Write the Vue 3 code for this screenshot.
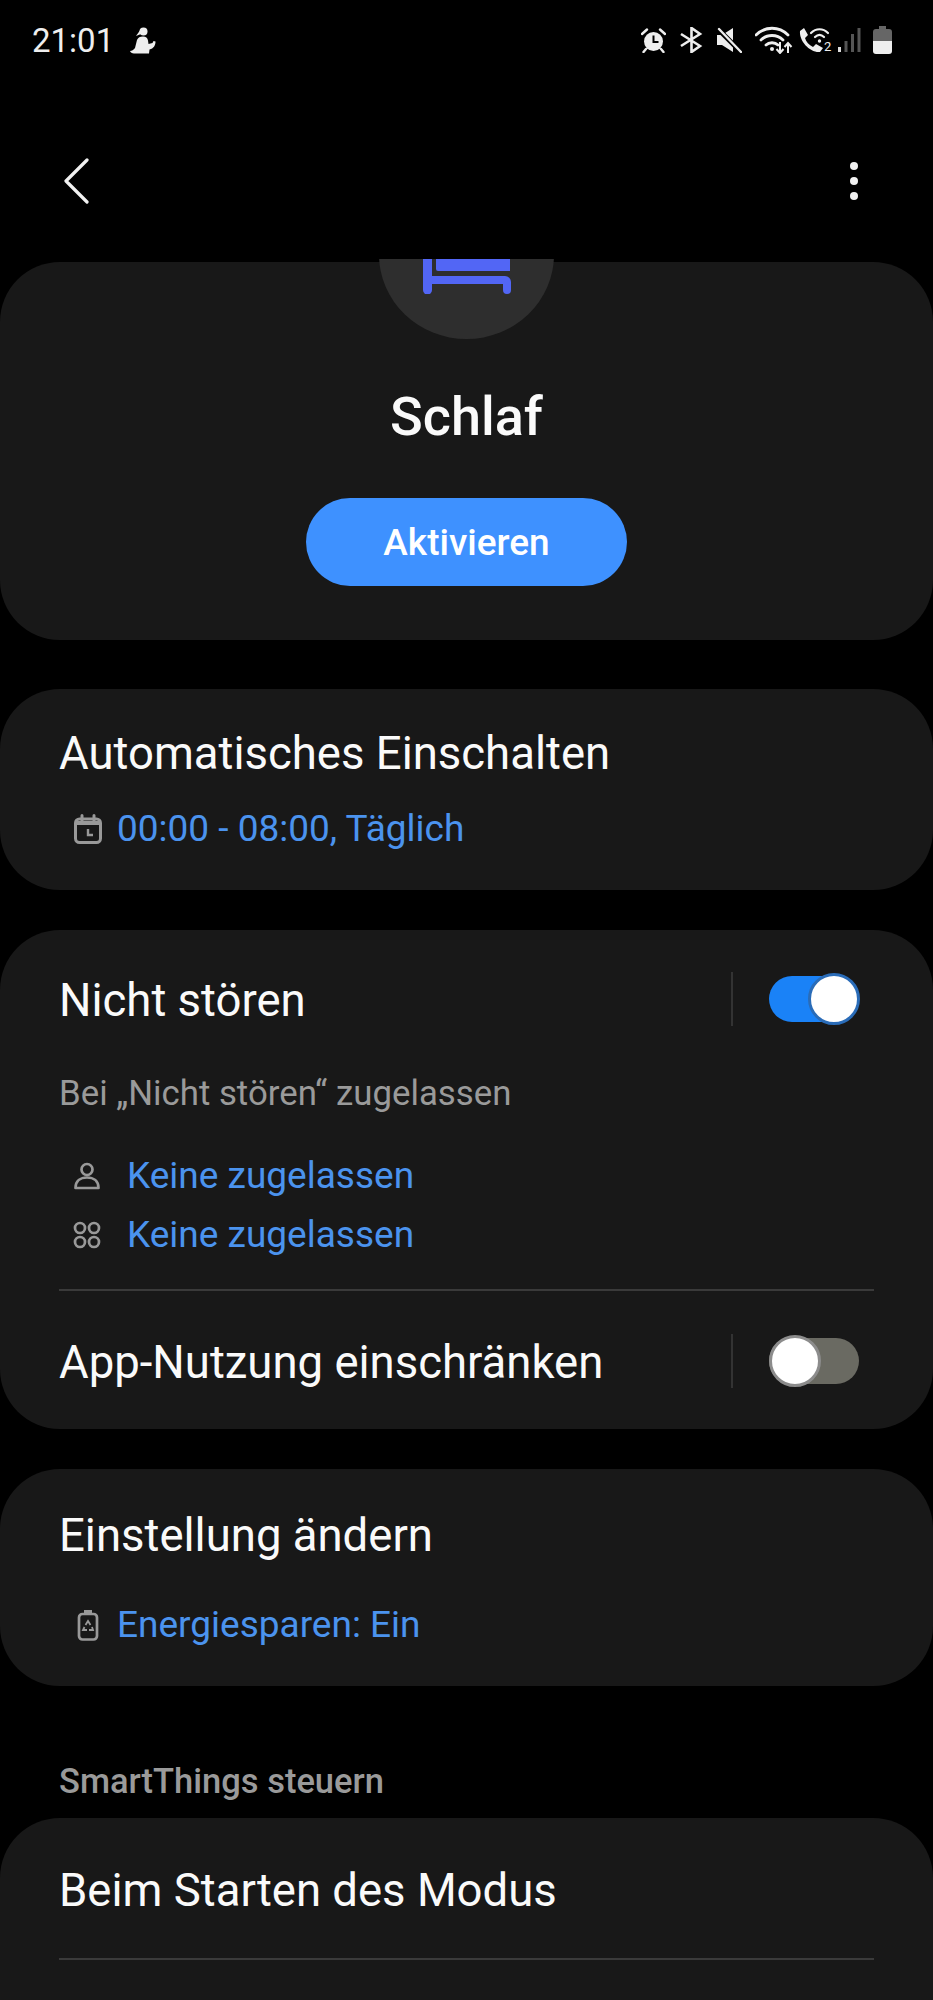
<template>
  <div class="screen">
    <!-- status bar -->
    <div class="status-bar">
      <div class="status-left">
        <span class="clock">21:01</span>
        <svg class="st-figure" viewBox="0 0 26 27" width="26" height="27">
          <circle cx="13.500" cy="4.500" r="4" fill="#eee" />
          <path d="M11 2L6 9l5-2Z" fill="#eee" />
          <path d="M13 9.500c3 0 4.500 1.500 5 4l.5 3.500 4-1 1-2 2 .5c0 4-2 7-6 8l-.5 4H4c-2 0-3.500-1-4-2.500 2 0 3.500-1 5-3l2-8c1-2.500 3-3.500 6-3.500Z" fill="#eee" />
        </svg>
      </div>
      <div class="status-right">
        <svg viewBox="0 0 25 25" width="25" height="25" class="st-alarm">
          <circle cx="12.5" cy="13.5" r="9.5" fill="#eee" />
          <path d="M12.5 7.500v6.500h5" fill="none" stroke="#000" stroke-width="2" />
          <path d="M1 6l5-4.500M24 6l-5-4.500M5 21l-2.500 3M20 21l2.500 3" stroke="#eee" stroke-width="2.400" stroke-linecap="round" />
        </svg>
        <svg viewBox="0 0 24 26" width="24" height="26" class="st-bt">
          <path d="M2 7l19 12-8.500 6V1L21 7 2 19" fill="none" stroke="#eee" stroke-width="2.600" />
        </svg>
        <svg viewBox="0 0 26 26" width="26" height="26" class="st-mute">
          <path d="M1 8h5l11-7v24L6 18H1Z" fill="#eee" />
          <path d="M0 0l26 26" stroke="#000" stroke-width="5" />
          <path d="M3 2l22 23" stroke="#eee" stroke-width="2.400" stroke-linecap="round" />
        </svg>
        <svg viewBox="0 0 38 28" width="38" height="28" class="st-wifi">
          <path d="M1 9c9-9 23-9 32 0M6 14c6-6 16-6 22 0M11 19c3-3 9-3 12 0" fill="none" stroke="#eee" stroke-width="2.800" stroke-linecap="round" />
          <circle cx="17" cy="23" r="2" fill="#eee" />
          <path d="M25 16v11M21.500 23l3.500 4 3.500-4M33 27V17M29.500 21l3.500-4 3.500 4" fill="none" stroke="#eee" stroke-width="2" />
        </svg>
        <svg viewBox="0 0 36 28" width="36" height="28" class="st-call">
          <path d="M6 2l4 7-3 3c1 4 4 7 8 9l3-3 7 4-3 4C12 27 1 15 2 5Z" fill="#eee" />
          <path d="M13 7c5-5 12-5 17 0M17 11c3-3 6-3 9 0" fill="none" stroke="#eee" stroke-width="2.200" stroke-linecap="round" />
          <circle cx="21.500" cy="15" r="1.700" fill="#eee" />
          <text x="26" y="25" class="st-two">2</text>
        </svg>
        <svg viewBox="0 0 24 26" width="24" height="26" class="st-signal">
          <rect x="1" y="20" width="3" height="5" fill="#ddd" />
          <rect x="7.500" y="14" width="3" height="11" fill="#555" />
          <rect x="14" y="7" width="3" height="18" fill="#555" />
          <rect x="20.500" y="1" width="3" height="24" fill="#555" />
        </svg>
        <svg viewBox="0 0 19 28" width="19" height="28" class="st-battery">
          <path d="M6 0h7v3h3a3 3 0 0 1 3 3v9H0V6a3 3 0 0 1 3-3h3Z" fill="#666" />
          <path d="M0 15h19v10a3 3 0 0 1-3 3H3a3 3 0 0 1-3-3Z" fill="#eee" />
        </svg>
      </div>
    </div>

    <!-- top bar -->
    <div class="top-bar">
      <svg class="back" viewBox="0 0 28 46" width="28" height="46">
        <path d="M25 2 L4 23 L25 44" fill="none" stroke="#f2f2f2" stroke-width="3.200" stroke-linecap="round" stroke-linejoin="round" />
      </svg>
      <div class="more"><i></i><i></i><i></i></div>
    </div>

    <!-- scrolled content, clipped under the top bar -->
    <div class="scroller">
      <div class="mode-icon">
        <svg viewBox="0 0 88 35" width="88" height="35" class="bed">
          <path d="M13 0h74v12H15a2 2 0 0 1-2-2Z" fill="#5266f5" />
          <path d="M0 0h9v17h73a6 6 0 0 1 6 6v8a4 4 0 0 1-8 0v-6H9v6a4.500 4.500 0 0 1-9 0Z" fill="#5266f5" />
        </svg>
      </div>

      <section class="card hero">
        <h1 class="mode-title">Schlaf</h1>
        <button class="activate">Aktivieren</button>
      </section>

      <section class="card auto">
        <div class="row-title">Automatisches Einschalten</div>
        <div class="info-row">
          <svg viewBox="0 0 28 30" width="28" height="30" class="ic">
            <rect x="1.500" y="5" width="25" height="23.500" rx="4" fill="none" stroke="#999" stroke-width="3" />
            <path d="M2 9h24" stroke="#999" stroke-width="4" />
            <path d="M8 1.500v5M20 1.500v5" stroke="#999" stroke-width="3" stroke-linecap="round" />
            <path d="M14 15v6h5" fill="none" stroke="#999" stroke-width="2.400" />
          </svg>
          <span class="blue">00:00 - 08:00, Täglich</span>
        </div>
      </section>

      <section class="card dnd">
        <div class="toggle-row">
          <span class="row-title">Nicht stören</span>
          <span class="divider"></span>
          <span class="switch on"><i></i></span>
        </div>
        <div class="sub">Bei „Nicht stören“ zugelassen</div>
        <div class="allow-row">
          <svg viewBox="0 0 28 28" width="28" height="28" class="ic">
            <circle cx="14" cy="7.500" r="5.500" fill="none" stroke="#999" stroke-width="2.700" />
            <path d="M2.500 26c0-7 5-10.500 11.500-10.500S25.500 19 25.500 26Z" fill="none" stroke="#999" stroke-width="2.700" stroke-linejoin="round" />
          </svg>
          <span class="blue">Keine zugelassen</span>
        </div>
        <div class="allow-row second">
          <svg viewBox="0 0 28 28" width="28" height="28" class="ic">
            <circle cx="7" cy="7" r="5" fill="none" stroke="#999" stroke-width="2.700" />
            <circle cx="21" cy="7" r="5" fill="none" stroke="#999" stroke-width="2.700" />
            <circle cx="7" cy="21" r="5" fill="none" stroke="#999" stroke-width="2.700" />
            <circle cx="21" cy="21" r="5" fill="none" stroke="#999" stroke-width="2.700" />
          </svg>
          <span class="blue">Keine zugelassen</span>
        </div>
        <div class="rule"></div>
        <div class="toggle-row app">
          <span class="row-title">App-Nutzung einschränken</span>
          <span class="divider"></span>
          <span class="switch"><i></i></span>
        </div>
      </section>

      <section class="card change">
        <div class="row-title">Einstellung ändern</div>
        <div class="info-row">
          <svg viewBox="0 0 28 32" width="28" height="32" class="ic">
            <rect x="5" y="5" width="18" height="25.500" rx="3.500" fill="none" stroke="#999" stroke-width="2.700" />
            <rect x="10" y="1" width="8" height="4.500" fill="#999" />
            <path d="M11.500 16l2.500-4 2.500 4M18 18l1 3h-4M13 21H9l1.500-3" fill="none" stroke="#999" stroke-width="1.800" />
          </svg>
          <span class="blue">Energiesparen: Ein</span>
        </div>
      </section>

      <div class="section-label">SmartThings steuern</div>

      <section class="card things">
        <div class="row-title">Beim Starten des Modus</div>
        <div class="rule"></div>
      </section>
    </div>
  </div>
</template>

<script setup>
</script>

<style>
html, body {
  background: #000;
}
</style>

<style scoped>
.screen {
  width: 933px;
  height: 2000px;
  background: #000;
  overflow: hidden;
  font-family: Roboto, "Noto Sans", sans-serif;
  color: #fafafa;
  display: flex;
  flex-direction: column;
}

/* status bar */
.status-bar {
  height: 40px;
  margin-top: 20px;
  padding: 0 41px 0 32px;
  display: flex;
  align-items: center;
  justify-content: space-between;
}
.status-left {
  display: flex;
  align-items: center;
  gap: 16px;
}
.clock {
  font-size: 33px;
  color: #eee;
}
.status-right {
  display: flex;
  align-items: center;
}
.status-right svg {
  display: block;
  flex-shrink: 0;
}
.st-alarm { margin-right: 13px; }
.st-bt { margin-right: 13px; }
.st-mute { margin-right: 13px; }
.st-wifi { margin-right: 5px; }
.st-call { margin-right: 3px; }
.st-signal { margin-right: 12px; }
.st-two {
  font-size: 13px;
  fill: #eee;
  font-family: Roboto, sans-serif;
}

/* top bar */
.top-bar {
  height: 199px;
  padding: 42px 75px 0 62px;
  display: flex;
  align-items: center;
  justify-content: space-between;
  box-sizing: border-box;
}
.back {
  display: block;
}
.more {
  display: flex;
  flex-direction: column;
  gap: 7px;
}
.more i {
  width: 8px;
  height: 8px;
  border-radius: 50%;
  background: #f2f2f2;
}

/* scroller */
.scroller {
  flex: 1;
  overflow: hidden;
  position: relative;
  padding-top: 3px;
}
.mode-icon {
  position: absolute;
  left: 379px;
  top: -89px;
  width: 175px;
  height: 169px;
  border-radius: 50%;
  background: #2e2e2e;
  z-index: 1;
}
.bed {
  position: absolute;
  left: 44px;
  top: 89px;
}
.card {
  background: #181818;
  border-radius: 60px;
}
.hero {
  height: 378px;
  margin-bottom: 49px;
  display: flex;
  flex-direction: column;
  align-items: center;
  box-sizing: border-box;
  padding-top: 123px;
}
.mode-title {
  margin: 0;
  font-size: 54px;
  font-weight: 500;
  line-height: 64px;
}
.activate {
  margin-top: 49px;
  width: 321px;
  height: 88px;
  border: 0;
  border-radius: 44px;
  background: #3e91ff;
  color: #fff;
  font-family: inherit;
  font-size: 37px;
  font-weight: 500;
  padding-top: 2px;
}
.row-title {
  font-size: 45.500px;
  line-height: 50px;
  color: #fafafa;
}
.auto {
  height: 201px;
  margin-bottom: 40px;
  padding: 40px 59px 0;
  box-sizing: border-box;
}
.info-row {
  display: flex;
  align-items: center;
  gap: 15px;
  padding-left: 15px;
  margin-top: 28px;
}
.ic {
  display: block;
  flex-shrink: 0;
}
.blue {
  font-size: 37px;
  line-height: 44px;
  color: #4b93ee;
}
.dnd {
  height: 499px;
  margin-bottom: 40px;
  padding: 41px 59px 0;
  box-sizing: border-box;
}
.toggle-row {
  display: flex;
  align-items: center;
  height: 60px;
}
.toggle-row .row-title {
  flex: 1;
}
.divider {
  width: 2px;
  height: 54px;
  background: #333;
  margin-right: 36px;
  margin-bottom: 5px;
}
.switch {
  width: 90px;
  height: 46px;
  border-radius: 23px;
  background: #6a6a62;
  position: relative;
  margin-right: 15px;
  margin-bottom: 5px;
}
.switch.on {
  background: #1a82f7;
}
.switch i {
  position: absolute;
  top: -3px;
  left: 0;
  width: 52px;
  height: 52px;
  box-sizing: border-box;
  border-radius: 50%;
  background: #fff;
  border: 3px solid #8c8c8c;
}
.switch.on i {
  left: auto;
  right: -1px;
  border-color: #2a6cb8;
}
.sub {
  margin-top: 42px;
  font-size: 34.800px;
  line-height: 40px;
  color: #9a9a9a;
}
.allow-row {
  display: flex;
  align-items: center;
  gap: 26px;
  padding-left: 14px;
  margin-top: 41px;
}
.allow-row.second {
  margin-top: 15px;
}
.rule {
  height: 2px;
  background: #3a3a3a;
  margin-top: 32px;
}
.toggle-row.app {
  margin-top: 42px;
}
.change {
  height: 217px;
  padding: 42px 59px 0;
  box-sizing: border-box;
}
.change .info-row {
  margin-top: 42px;
}
.section-label {
  padding: 76px 59px 0;
  font-size: 34.500px;
  line-height: 38px;
  font-weight: 500;
  color: #9a9a9a;
  margin-bottom: 18px;
}
.things {
  height: 300px;
  padding: 48px 59px 0;
  box-sizing: border-box;
}
.things .rule {
  margin-top: 42px;
}
</style>
